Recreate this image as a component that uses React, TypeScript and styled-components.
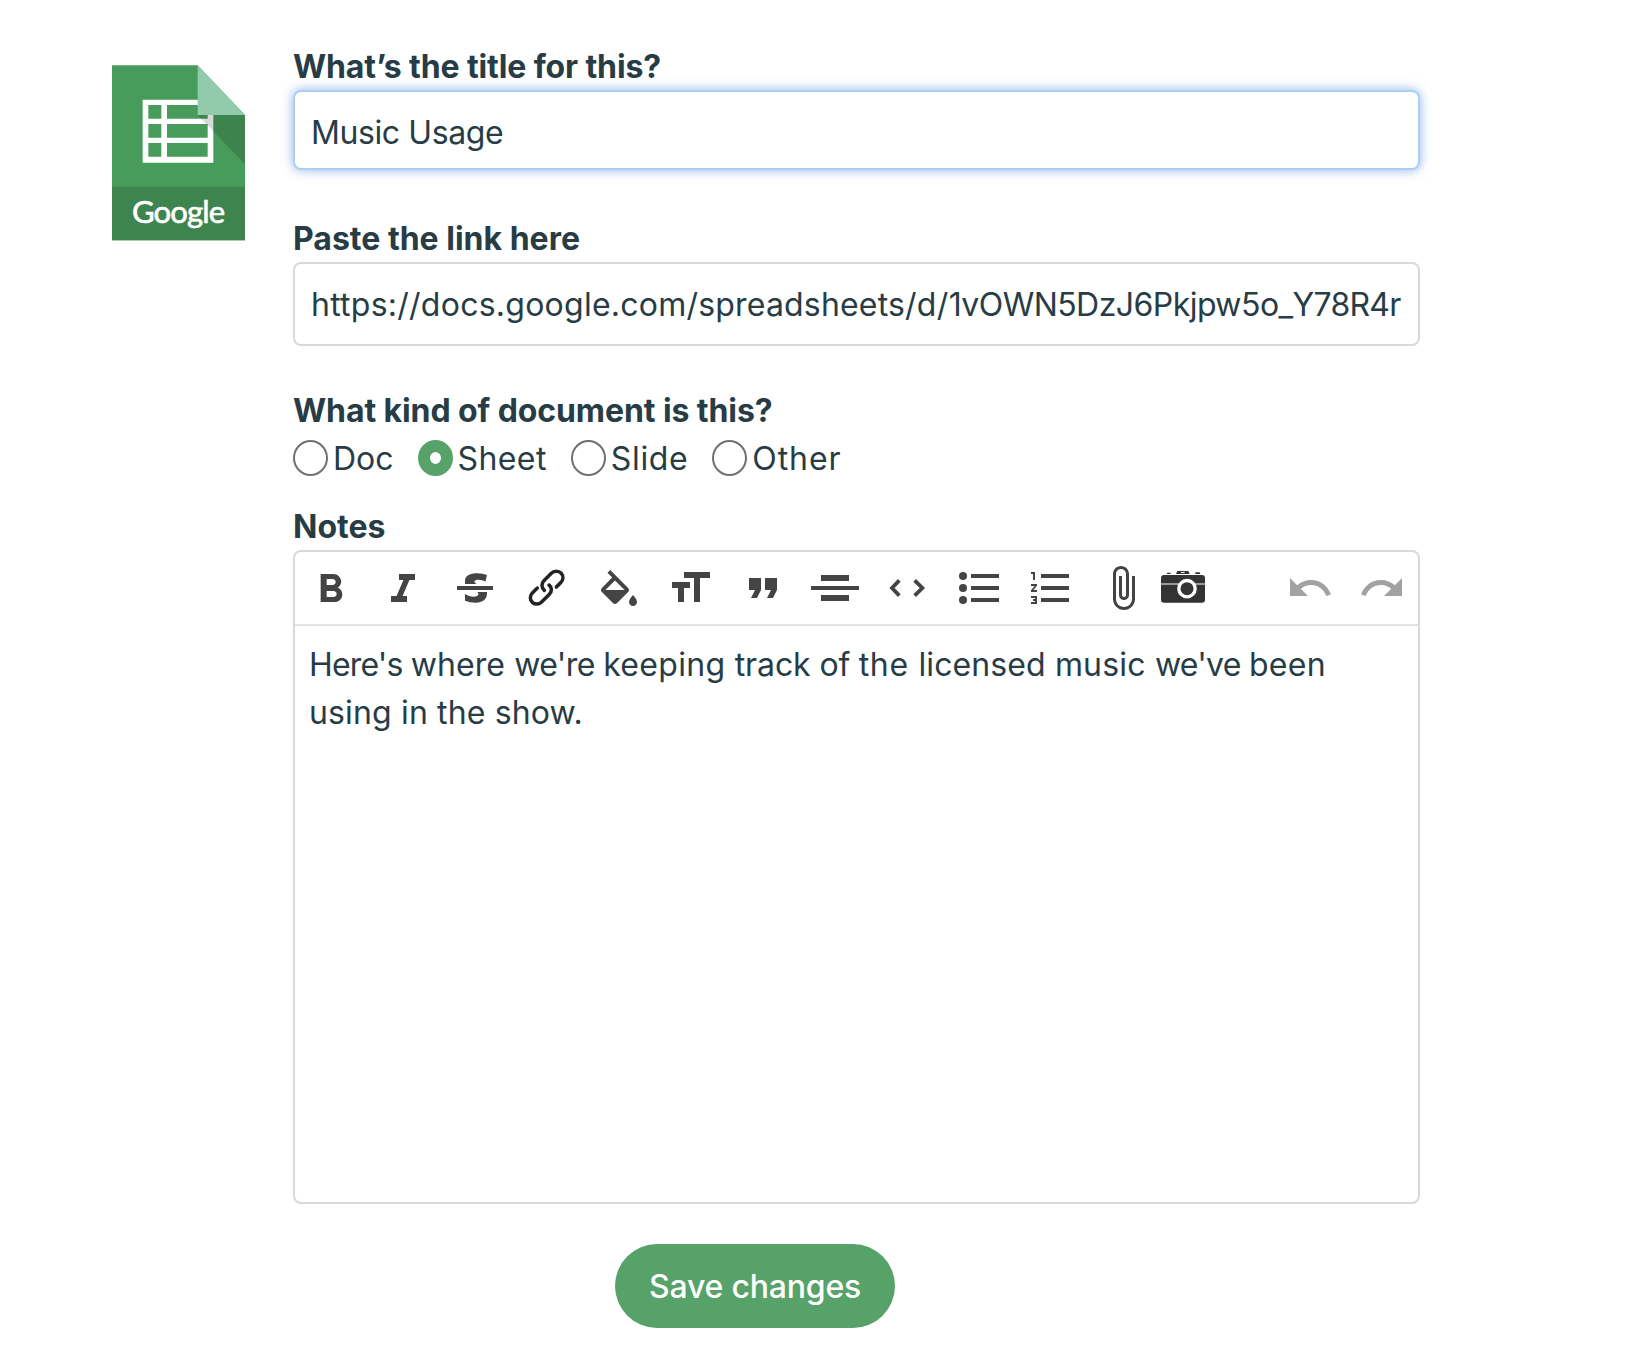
import React from 'react';
import styled, { createGlobalStyle } from 'styled-components';

const ink = '#283c46';
const green = '#56a269';
const line = '#d9d9d9';

const GlobalStyle = createGlobalStyle`
  * { box-sizing: border-box; }
  body {
    margin: 0;
    background: #fff;
    color: ${ink};
    font: 400 32px/48px Inter, 'Liberation Sans', sans-serif;
  }
`;

const Page = styled.main`
  display: flex;
  gap: 48px;
  height: 1362px;
  padding: 42px 0 0 112px;
`;

const DocumentIcon = styled.svg`
  flex: none;
  width: 133px;
  height: 176px;
  margin-top: 23px;
`;

const LogoText = styled.text`
  font: 400 93px Lato, sans-serif;
  fill: #fff;
  stroke: #fff;
  stroke-width: 2px;
`;

const Form = styled.form`
  display: flex;
  flex-direction: column;
  width: 1127px;
`;

const Field = styled.div<{ $after: number }>`
  display: flex;
  flex-direction: column;
  margin-bottom: ${(p) => p.$after}px;
`;

const Label = styled.label<{ $tracking?: number }>`
  height: 48px;
  padding-top: 1px;
  font-weight: 700;
  letter-spacing: ${(p) => p.$tracking ?? 0}px;
  white-space: nowrap;
`;

const TitleInput = styled.input`
  width: 100%;
  height: 80px;
  padding: 4px 14px 0 16px;
  border: 2px solid #a9cff9;
  border-radius: 8px;
  outline: none;
  background: #fff;
  box-shadow: 0 0 11px rgba(80, 130, 215, 0.62);
  color: ${ink};
  font: inherit;
  letter-spacing: -0.4px;
`;

const LinkInput = styled.div`
  height: 84px;
  padding: 17px 14px 15px 16px;
  border: 2px solid ${line};
  border-radius: 8px;
  overflow: hidden;
  white-space: nowrap;
`;

const Options = styled.div`
  display: flex;
  gap: 24px;
  height: 48px;
`;

const Option = styled.label<{ $tracking: number }>`
  display: flex;
  align-items: center;
  gap: 5px;
  letter-spacing: ${(p) => p.$tracking}px;
`;

const OptionName = styled.span`
  padding-top: 2px;
`;

const Radio = styled.span<{ $checked: boolean }>`
  display: block;
  width: 35px;
  height: 36px;
  border: ${(p) => (p.$checked ? `12px solid ${green}` : '2px solid #707070')};
  border-radius: 50%;
  background: #fff;
`;

const Editor = styled.div`
  display: flex;
  flex-direction: column;
  height: 654px;
  border: 2px solid ${line};
  border-radius: 8px;
`;

const Toolbar = styled.div`
  display: flex;
  height: 74px;
  border-bottom: 2px solid #e3e3e3;
`;

const ToolButton = styled.button<{ $w?: number; $muted?: boolean }>`
  width: ${(p) => p.$w ?? 72}px;
  height: 72px;
  padding: 0;
  border: 0;
  background: none;
  color: ${(p) => (p.$muted ? '#a2a2a2' : '#444')};

  svg {
    display: block;
    width: 100%;
    height: 100%;
    fill: currentColor;
  }
`;

const Spacer = styled.span`
  flex: 1;
`;

const Content = styled.div`
  padding: 15px 14px 14px;
`;

const TextLine = styled.div`
  white-space: nowrap;
`;

const Run = styled.span<{ $tracking: number }>`
  letter-spacing: ${(p) => p.$tracking}px;
`;

const SaveButton = styled.button`
  width: 280px;
  height: 84px;
  margin: 40px 0 0 322px;
  padding: 2px 0 0;
  border: 0;
  border-radius: 42px;
  background: ${green};
  color: #fff;
  font: 500 32px/48px Inter, 'Liberation Sans', sans-serif;
  letter-spacing: -0.2px;
`;

type ToolProps = { label: string; x: number; w?: number; muted?: boolean; children: React.ReactNode };

function Tool({ label, x, w = 72, muted, children }: ToolProps) {
  return (
    <ToolButton type="button" aria-label={label} $w={w} $muted={muted}>
      <svg viewBox={`${x} 36 ${w * 3} 216`}>{children}</svg>
    </ToolButton>
  );
}

function Glyph({ x, y = 72, d }: { x: number; y?: number; d: string }) {
  return <path transform={`translate(${x} ${y}) scale(6)`} d={d} />;
}

type TextRun = [text: string, tracking: number];

function Runs({ runs }: { runs: TextRun[] }) {
  return (
    <>
      {runs.map(([text, tracking]) => (
        <Run key={text} $tracking={tracking}>
          {text}
        </Run>
      ))}
    </>
  );
}

function SheetsIcon() {
  return (
    <DocumentIcon viewBox="36 45 399 528" aria-label="Google Sheets">
      <path fill="#479b5b" d="M36 46H293L435 195V571H36Z" />
      <path fill="#3e844e" d="M36 410H435V571H36Z" />
      <path
        fill="#fff"
        fillRule="evenodd"
        d="M128 149H340V338H128ZM145 165V206H184V165ZM201 165V206H323V165ZM145 222V263H184V222ZM201 222V263H323V222ZM145 279V320H184V279ZM201 279V320H323V279Z"
      />
      <path fill="#000" fillOpacity=".15" d="M293 195H435V343Z" />
      <path fill="#91cbac" d="M293 46L435 195H293Z" />
      <LogoText x="96" y="519" textLength="279" lengthAdjust="spacing">
        Google
      </LogoText>
    </DocumentIcon>
  );
}

function EditorToolbar() {
  return (
    <Toolbar>
      <Tool label="Bold" x={45}>
        <Glyph x={80} y={78} d="M15.6 10.79c.97-.67 1.65-1.77 1.65-2.79 0-2.26-1.75-4-4-4H7v14h7.04c2.09 0 3.79-1.7 3.79-3.79 0-1.52-.86-2.82-2.23-3.42zM10 6.5h3c.83 0 1.5.67 1.5 1.5s-.67 1.5-1.5 1.5h-3v-3zm3.5 9H10v-3h3.5c.83 0 1.5.67 1.5 1.5s-.67 1.5-1.5 1.5z" />
      </Tool>
      <Tool label="Italic" x={261}>
        <Glyph x={297} y={78} d="M10 4v3h2.21l-3.42 8H6v3h8v-3h-2.21l3.42-8H18V4z" />
      </Tool>
      <Tool label="Strikethrough" x={477}>
        <path d="M531 138H639V150H531Z" />
        <path d="M555 132V122C556 107 570 100 592 100Q608 100 621 105L616 125C605 118 586 117 583 124Q583 129 590 132Z" />
        <path d="M592 156H621C622 176 611 187 588 188Q568 188 555 182V162C566 170 588 173 594 166Q598 161 592 156Z" />
      </Tool>
      <Tool label="Link" x={693}>
        <g fill="none" stroke="#222" strokeWidth="10.5" strokeLinecap="round">
          <path d="M829 141L842 128C850 120 851 108 844 100C836 92 822 92 814 100L793 121C783 131 784 143 793 151" />
          <path d="M772 144L757 159C749 167 749 179 757 187C765 194 777 194 784 187L807 164C817 154 816 142 807 135" />
        </g>
      </Tool>
      <Tool label="Color" x={39}>
        <Glyph x={75} y={90} d="M16.56 8.94L7.62 0 6.21 1.41l2.38 2.38-5.15 5.15c-.59.59-.59 1.54 0 2.12l5.5 5.5c.29.29.68.44 1.06.44s.77-.15 1.06-.44l5.5-5.5c.59-.58.59-1.53 0-2.12zM5.21 10L10 5.21 14.79 10H5.21z" />
        <Glyph x={75} y={96} d="M19 11.5s-2 2.17-2 3.5c0 1.1.9 2 2 2s2-.9 2-2c0-1.33-2-3.5-2-3.5z" />
      </Tool>
      <Tool label="Text size" x={255}>
        <Glyph x={288} d="M9 4v3h5v12h3V7h5V4H9zm-6 8h3v7h3v-7h3V9H3v3z" />
      </Tool>
      <Tool label="Quote" x={471}>
        <Glyph x={507} d="M6 17h3l2-4V7H5v6h3zm8 0h3l2-4V7h-6v6h3z" />
      </Tool>
      <Tool label="Divider" x={687}>
        <path d="M753 105H837V123H753ZM723 138H867V150H723ZM753 165H837V183H753Z" />
      </Tool>
      <Tool label="Code" x={33}>
        <path fill="none" stroke="currentColor" strokeWidth="11.5" d="M118 121L96 144L118 167M164 121L187 144L164 167" />
      </Tool>
      <Tool label="Bulleted list" x={249}>
        <circle cx="309" cy="108" r="12" />
        <circle cx="309" cy="144" r="12" />
        <circle cx="309" cy="180" r="12" />
        <path d="M333 102H417V114H333ZM333 138H417V150H333ZM333 174H417V186H333Z" />
      </Tool>
      <Tool label="Numbered list" x={465}>
        <Glyph x={501} d="M2 17h2v.5H3v1h1v.5H2v1h3v-4H2v1zm1-9h1V4H2v1h1v3zm-1 3h1.8L2 13.1v.9h3v-1H3.2L5 10.9V10H2v1zm5-6v2h14V5H7zm0 14h14v-2H7v2zm0-6h14v-2H7v2z" />
      </Tool>
      <Tool label="Attach file" x={681}>
        <Glyph x={717} d="M16.5 6v11.5c0 2.21-1.79 4-4 4s-4-1.79-4-4V5c0-1.38 1.12-2.5 2.5-2.5s2.5 1.12 2.5 2.5v10.5c0 .55-.45 1-1 1s-1-.45-1-1V6H10v9.5c0 1.38 1.12 2.5 2.5 2.5s2.5-1.12 2.5-2.5V5c0-2.21-1.79-4-4-4S7 2.79 7 5v12.5c0 3.04 2.46 5.5 5.5 5.5s5.5-2.46 5.5-5.5V6h-1.5z" />
      </Tool>
      <Tool label="Add photo" x={57} w={48}>
        <g fill="#333">
          <rect x="63" y="105" width="132" height="83" rx="9" />
          <path d="M80 102L82 98H91L93 102ZM108 102L112 93H145L149 102ZM165 102L167 97H179L181 102Z" />
        </g>
        <path fill="#fff" d="M123 96H134V99H123Z" />
        <path fill="#bbb" d="M63 130H195V134H63Z" />
        <circle cx="141" cy="146" r="24.5" fill="#333" stroke="#fff" strokeWidth="10" />
      </Tool>
      <Spacer />
      <Tool label="Undo" x={402} muted>
        <Glyph x={438} d="M12.5 8c-2.65 0-5.05.99-6.9 2.6L2 7v9h9l-3.62-3.62c1.39-1.16 3.16-1.88 5.12-1.88 3.54 0 6.55 2.31 7.6 5.5l2.37-.78C21.08 11.03 17.15 8 12.5 8z" />
      </Tool>
      <Tool label="Redo" x={618} muted>
        <Glyph x={654} d="M18.4 10.6C16.55 8.99 14.15 8 11.5 8c-4.65 0-8.58 3.03-9.96 7.22L3.9 16c1.05-3.19 4.05-5.5 7.6-5.5 1.95 0 3.73.72 5.12 1.88L13 16h9V7l-3.6 3.6z" />
      </Tool>
    </Toolbar>
  );
}

const kinds = [
  { name: 'Doc', tracking: 0 },
  { name: 'Sheet', tracking: 0.4 },
  { name: 'Slide', tracking: 0.65 },
  { name: 'Other', tracking: 0.9 },
];

const link: TextRun[] = [
  ['https://', 0.25],
  ['docs.google.com/', 0.25],
  ['spreadsheets/', 0.17],
  ['d/', 0.4],
  ['1vOWN5DzJ6Pkjpw5o_', -0.55],
  ['Y78R4r', -0.75],
];

const firstLine: TextRun[] = [
  ["Here's ", -0.85],
  ['where ', 0.1],
  ["we're ", -0.6],
  ['keeping ', 0.3],
  ['track ', -0.08],
  ['of ', -0.3],
  ['the ', 0.7],
  ['licensed ', 0.1],
  ['music ', 0.2],
  ["we've ", -0.75],
  ['been', 0.3],
];

export default function App() {
  return (
    <>
      <GlobalStyle />
      <Page>
        <SheetsIcon />
        <Form>
          <Field $after={44}>
            <Label $tracking={-0.13}>What’s the title for this?</Label>
            <TitleInput defaultValue="Music Usage" />
          </Field>
          <Field $after={40}>
            <Label>Paste the link here</Label>
            <LinkInput>
              <Runs runs={link} />
            </LinkInput>
          </Field>
          <Field $after={20}>
            <Label $tracking={-0.09}>What kind of document is this?</Label>
            <Options>
              {kinds.map((kind) => (
                <Option key={kind.name} $tracking={kind.tracking}>
                  <Radio $checked={kind.name === 'Sheet'} />
                  <OptionName>{kind.name}</OptionName>
                </Option>
              ))}
            </Options>
          </Field>
          <Field $after={0}>
            <Label>Notes</Label>
            <Editor>
              <EditorToolbar />
              <Content>
                <TextLine>
                  <Runs runs={firstLine} />
                </TextLine>
                <TextLine>
                  <Run $tracking={0.15}>using in the show.</Run>
                </TextLine>
              </Content>
            </Editor>
          </Field>
          <SaveButton type="button">Save changes</SaveButton>
        </Form>
      </Page>
    </>
  );
}
